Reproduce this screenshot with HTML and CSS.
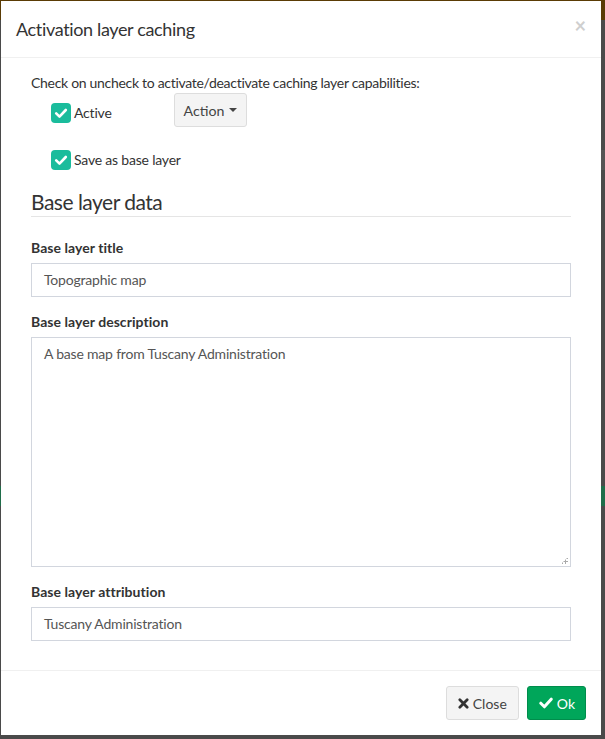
FILE: index.html
```html
<!DOCTYPE html>
<html>
<head>
<meta charset="utf-8">
<link rel="stylesheet" href="styles.css">
</head>
<body>
<div class="modal">
  <div class="modal-header">
    <h4 class="modal-title">Activation layer caching</h4>
    <span class="close">×</span>
  </div>
  <div class="modal-body">
    <p class="intro">Check on uncheck to activate/deactivate caching layer capabilities:</p>
    <div class="row-active">
      <label class="check">
        <span class="box"><svg viewBox="0 0 20 20" width="20" height="20"><rect width="20" height="20" rx="4" fill="#1abc9c"/><path d="M5.2 10.4l3.3 3.2 6.3-6.6" fill="none" stroke="#fff" stroke-width="2.6" stroke-linecap="round" stroke-linejoin="round"/></svg></span>
        <span>Active</span>
      </label>
      <button class="btn btn-default action">Action <span class="caret"></span></button>
    </div>
    <label class="check check-save">
      <span class="box"><svg viewBox="0 0 20 20" width="20" height="20"><rect width="20" height="20" rx="4" fill="#1abc9c"/><path d="M5.2 10.4l3.3 3.2 6.3-6.6" fill="none" stroke="#fff" stroke-width="2.6" stroke-linecap="round" stroke-linejoin="round"/></svg></span>
      <span>Save as base layer</span>
    </label>
    <h3 class="section">Base layer data</h3>
    <div class="form-group">
      <label class="lbl">Base layer title</label>
      <div class="input">Topographic map</div>
    </div>
    <div class="form-group">
      <label class="lbl">Base layer description</label>
      <div class="input textarea">A base map from Tuscany Administration<span class="grip"></span></div>
    </div>
    <div class="form-group last">
      <label class="lbl">Base layer attribution</label>
      <div class="input">Tuscany Administration</div>
    </div>
  </div>
  <div class="modal-footer">
    <button class="btn btn-default btn-close"><svg class="ico" viewBox="0 0 12 12" width="11" height="11"><path d="M2 2l8 8M10 2l-8 8" stroke="#333" stroke-width="3" stroke-linecap="round"/></svg>Close</button>
    <button class="btn btn-success"><svg class="ico" viewBox="0 0 14 12" width="14" height="12"><path d="M1.8 6.2l3.6 3.6 6.8-7.6" fill="none" stroke="#fff" stroke-width="3" stroke-linecap="round" stroke-linejoin="round"/></svg>Ok</button>
  </div>
</div>
</body>
</html>
```
FILE: styles.css
```css
html, body {
  margin: 0;
  padding: 0;
}
body {
  width: 605px;
  height: 739px;
  overflow: hidden;
  font-family: "Lato", "Open Sans", sans-serif;
  font-size: 14px;
  color: #333;
  background:
    linear-gradient(#5a3b05 0 20px, transparent 20px),
    linear-gradient(transparent 486px, #1f6d4a 486px 506px, transparent 506px),
    linear-gradient(transparent 150px, #555 150px 170px, transparent 170px),
    #4a4a4a;
}
.modal {
  margin: 1px 0 0 1px;
  width: 600px;
  height: 734px;
  background: #fff;
  display: flex;
  flex-direction: column;
}
.modal-header {
  height: 26px;
  padding: 15px 15px 15px 15px;
  border-bottom: 1px solid #f0f0f0;
  display: flex;
  align-items: center;
  justify-content: space-between;
}
.modal-title {
  margin: 0;
  font-size: 18px;
  font-weight: 400;
  line-height: 26px;
  color: #333;
  letter-spacing: -0.35px;
}
.close {
  font-size: 20px;
  font-weight: 700;
  color: #cfcfcf;
  line-height: 1;
  margin-right: 0;
  margin-top: -9px;
}
.modal-body {
  padding: 15px 30px 0 30px;
  flex: 1;
  border-bottom: 1px solid #f0f0f0;
}
.intro {
  margin: 0;
  line-height: 20px;
  letter-spacing: -0.3px;
}
.row-active {
  display: flex;
  align-items: flex-start;
  height: 34px;
}
.check {
  display: flex;
  align-items: center;
  gap: 3px;
  padding-left: 20px;
  line-height: 20px;
  letter-spacing: -0.2px;
}
.row-active .check {
  width: 123px;
  margin-top: 10px;
}
.box {
  width: 20px;
  height: 20px;
  display: block;
}
.box svg {
  display: block;
}
.check-save {
  margin-top: 23px;
}
.btn {
  font-family: inherit;
  font-size: 14px;
  height: 34px;
  padding: 0 10px;
  border-radius: 3px;
  border: 1px solid #ddd;
  display: inline-flex;
  align-items: center;
  gap: 4px;
  cursor: pointer;
}
.btn-default {
  background: #f4f4f4;
  color: #444;
}
.btn-close {
  padding: 0 11px;
}
.action {
  width: 73px;
  padding: 0;
  justify-content: center;
  font-size: 14.2px;
}
.caret {
  display: inline-block;
  width: 0;
  height: 0;
  border-top: 4px solid #444;
  border-left: 4px solid transparent;
  border-right: 4px solid transparent;
  margin-left: 1px;
}
.section {
  margin: 20px 0 21px 0;
  font-size: 21px;
  font-weight: 400;
  line-height: 24px;
  padding-bottom: 2px;
  border-bottom: 1px solid #e5e5e5;
  color: #333;
  letter-spacing: -0.5px;
}
.form-group {
  margin-bottom: 15px;
}
.lbl {
  display: block;
  font-weight: 700;
  line-height: 20px;
  margin-bottom: 5px;
  letter-spacing: 0.05px;
}
.input {
  height: 20px;
  line-height: 20px;
  padding: 6px 12px;
  border: 1px solid #d2d6de;
  color: #555;
  letter-spacing: -0.2px;
}
.textarea {
  height: 216px;
  position: relative;
}
.grip {
  position: absolute;
  right: 2px;
  bottom: 2px;
  width: 7px;
  height: 7px;
  background:
    radial-gradient(circle, #aaa 1px, transparent 1.2px) 0 0 / 3px 3px;
  clip-path: polygon(100% 0, 100% 100%, 0 100%);
}
.modal-footer {
  padding: 15px 15px 15px 15px;
  display: flex;
  justify-content: flex-end;
  gap: 8px;
}
.btn-success {
  background: #00a65a;
  border-color: #008d4c;
  color: #fff;
  padding: 0 10px 0 11px;
}
.ico {
  display: block;
}
```
